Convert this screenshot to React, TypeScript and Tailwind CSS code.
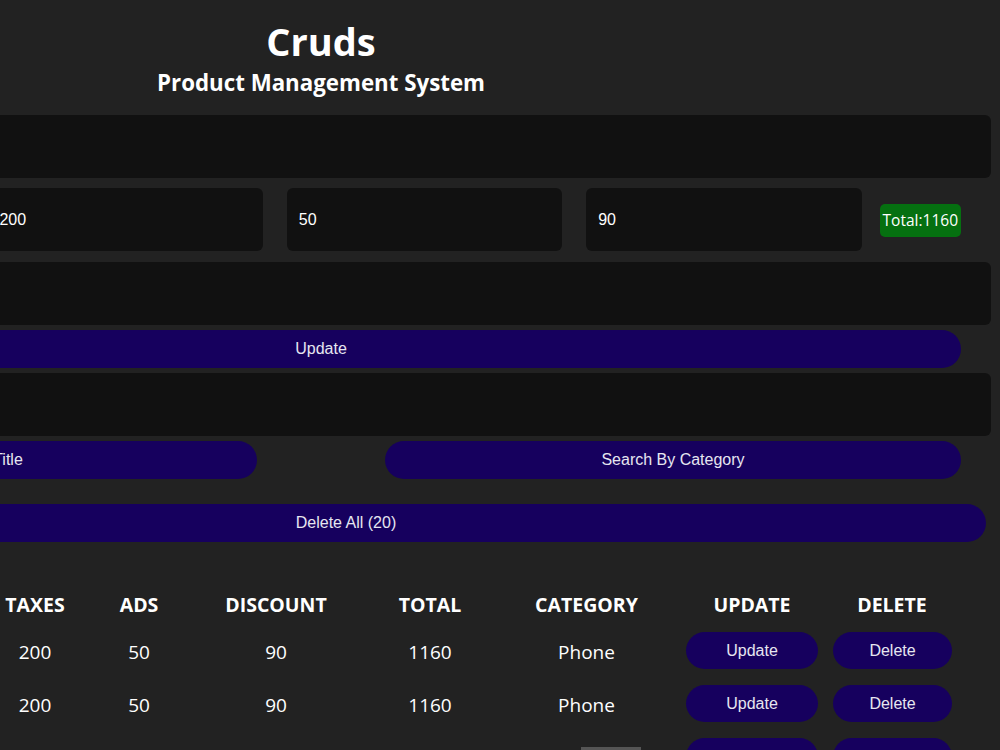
import React from "react";

const rows = [1, 2, 3, 4];
const head = ["ID", "TITLE", "PRICE", "TAXES", "ADS", "DISCOUNT", "TOTAL", "CATEGORY", "UPDATE", "DELETE"];

const seg = { fontFamily: '"Open Sans", "Noto Sans", sans-serif' };
const arial = { fontFamily: '"Liberation Sans", Arial, sans-serif' };

export default function App() {
  return (
    <div className="relative w-[1000px] h-[750px] overflow-hidden bg-[#222222] text-white">
      <div className="ml-[-319px] w-[1280px]">
        <div className="flex flex-col items-center pt-[16px]" style={seg}>
          <h1 className="text-[38px] font-bold leading-[50px]">Cruds</h1>
          <h2 className="text-[22.3px] font-bold leading-[33px]">Product Management System</h2>
        </div>

        <div className="mt-[16px] flex flex-col" style={arial}>
          <input className="w-[1310px] h-[63px] rounded-md bg-[#111111] px-3 text-base outline-none" />
          <div className="mt-[10px] ml-[7px] flex items-center gap-[24px]">
            <input defaultValue="1000" className="w-[276px] h-[63px] rounded-md bg-[#111111] px-3 text-base outline-none" />
            <input defaultValue="200" className="w-[276px] h-[63px] rounded-md bg-[#111111] px-3 text-base outline-none" />
            <input defaultValue="50" className="w-[276px] h-[63px] rounded-md bg-[#111111] px-3 text-base outline-none" />
            <input defaultValue="90" className="w-[276px] h-[63px] rounded-md bg-[#111111] px-3 text-base outline-none" />
            <span className="ml-[-6px] mt-[2px] rounded-[5px] bg-[#057010] px-[3px] py-[5px] text-[15.5px] leading-[23px]" style={seg}>
              Total:1160
            </span>
          </div>
          <input className="mt-[11px] w-[1310px] h-[63px] rounded-md bg-[#111111] px-3 text-base outline-none" />
          <button className="mt-[5px] w-[1280px] h-[38px] rounded-full bg-[#16005e] text-base text-[#e6e6f0]">Update</button>
          <input className="mt-[5px] w-[1310px] h-[63px] rounded-md bg-[#111111] px-3 text-base outline-none" />
          <div className="mt-[5px] flex gap-[128px]">
            <button className="w-[576px] h-[38px] rounded-full bg-[#16005e] text-base text-[#e6e6f0]">Search By Title</button>
            <button className="w-[576px] h-[38px] rounded-full bg-[#16005e] text-base text-[#e6e6f0]">Search By Category</button>
          </div>
          <button className="mt-[25px] ml-[25px] w-[1280px] h-[38px] rounded-full bg-[#16005e] text-base text-[#e6e6f0]">Delete All (20)</button>
        </div>

        <div className="mt-[51px] grid grid-cols-[60px_140px_99px_110px_98px_176px_132px_181px_150px_130px] text-center" style={seg}>
          {head.map((h) => (
            <div key={h} className="h-[33px] text-[19.5px] font-bold leading-[24px]">{h}</div>
          ))}
          {rows.map((r) => (
            <React.Fragment key={r}>
              <div className="h-[53px] flex items-center justify-center text-[19px]">{r}</div>
              <div className="h-[53px] flex items-center justify-center text-[19px]">iphone</div>
              <div className="h-[53px] flex items-center justify-center text-[19px]">1000</div>
              <div className="h-[53px] flex items-center justify-center text-[19px]">200</div>
              <div className="h-[53px] flex items-center justify-center text-[19px]">50</div>
              <div className="h-[53px] flex items-center justify-center text-[19px]">90</div>
              <div className="h-[53px] flex items-center justify-center text-[19px]">1160</div>
              <div className="h-[53px] flex items-center justify-center text-[19px]">Phone</div>
              <div className="h-[53px] flex items-center justify-center">
                <button className="mb-[4px] w-[132px] h-[37px] rounded-full bg-[#16005e] text-base text-[#e6e6f0]" style={arial}>Update</button>
              </div>
              <div className="h-[53px] flex items-center justify-start">
                <button className="mb-[4px] ml-[6px] w-[119px] h-[37px] rounded-full bg-[#16005e] text-base text-[#e6e6f0]" style={arial}>Delete</button>
              </div>
            </React.Fragment>
          ))}
        </div>
      </div>
      <div className="absolute bottom-0 left-[581px] h-[3px] w-[60px] bg-[#555555]" />
    </div>
  );
}
